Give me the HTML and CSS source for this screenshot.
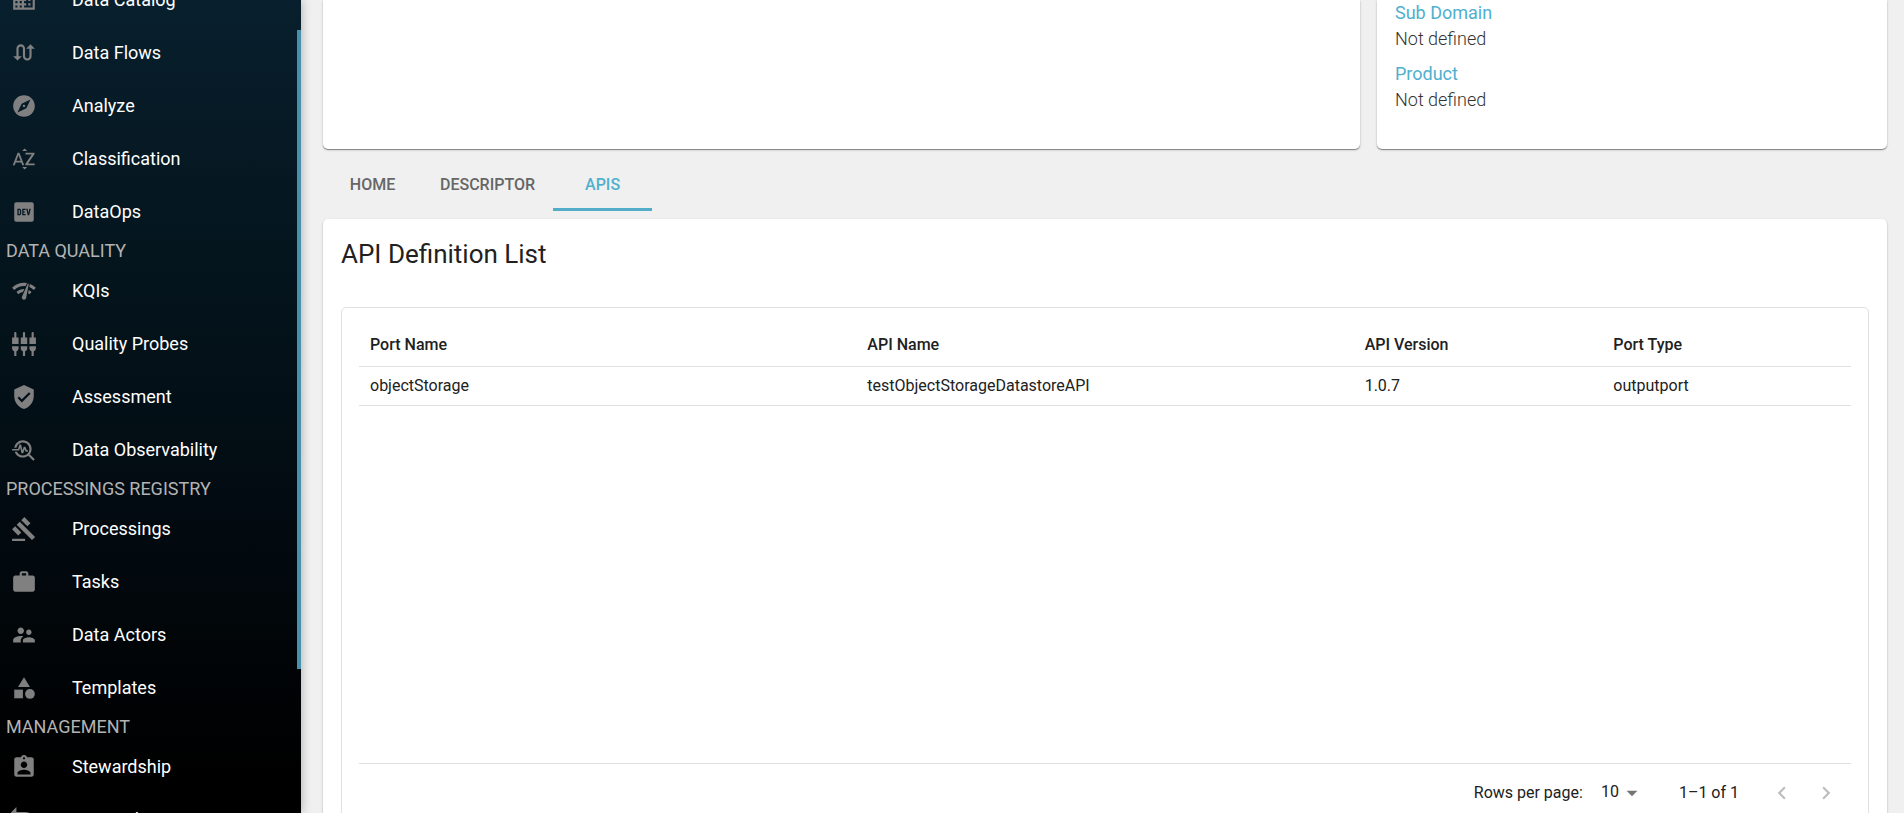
FILE: index.html
```html
<!DOCTYPE html>
<html lang="en">
<head>
<meta charset="utf-8">
<title>API Definition List</title>
<link rel="stylesheet" href="styles.css">
</head>
<body>
<div class="app">
  <aside class="sidebar">
    <nav class="menu">
      <a class="item" href="#"><svg viewBox="0 0 24 24"><path d="M12 7V3H2v18h20V7H12zM6 19H4v-2h2v2zm0-4H4v-2h2v2zm0-4H4V9h2v2zm0-4H4V5h2v2zm4 12H8v-2h2v2zm0-4H8v-2h2v2zm0-4H8V9h2v2zm0-4H8V5h2v2zm10 12h-8v-2h2v-2h-2v-2h2v-2h-2V9h8v10zm-2-8h-2v2h2v-2zm0 4h-2v2h2v-2z"/></svg>Data Catalog</a>
      <a class="item" href="#"><svg viewBox="0 0 24 24"><path d="M18 4l-4 4h3v7c0 1.100-.9 2-2 2s-2-.9-2-2V8c0-2.210-1.790-4-4-4S5 5.790 5 8v7H2l4 4 4-4H7V8c0-1.100.9-2 2-2s2 .9 2 2v7c0 2.210 1.790 4 4 4s4-1.790 4-4V8h3l-4-4z"/></svg>Data Flows</a>
      <a class="item" href="#"><svg viewBox="0 0 24 24"><path d="M12 10.900c-.61 0-1.100.49-1.100 1.100s.49 1.100 1.100 1.100c.61 0 1.100-.49 1.100-1.100s-.49-1.100-1.100-1.100zM12 2C6.480 2 2 6.480 2 12s4.480 10 10 10 10-4.480 10-10S17.520 2 12 2zm2.190 12.190L6 18l3.810-8.190L18 6l-3.810 8.190z"/></svg>Analyze</a>
      <a class="item" href="#"><svg viewBox="0 0 24 24"><path d="M14.940 4.660h-4.720l2.360-2.360zm-4.690 14.710h4.660l-2.330 2.330zM6.100 6.270L1.600 17.730h1.840l.92-2.450h5.110l.92 2.450h1.840L7.740 6.270H6.100zm-1.130 7.370l1.940-5.180 1.940 5.180H4.970zM15.730 16.140h6.120v1.590h-8.530v-1.290l5.920-8.560h-5.880v-1.600h8.300v1.260l-5.930 8.600z"/></svg>Classification</a>
      <a class="item" href="#"><svg viewBox="0 0 24 24"><path fill-rule="evenodd" d="M4 2h16a2 2 0 0 1 2 2v16a2 2 0 0 1-2 2H4a2 2 0 0 1-2-2V4a2 2 0 0 1 2-2zm1.200 6.700v6.600h2.700l1.200-1.200v-4.200L7.900 8.700zM6.500 10h1l.3.3v3.400l-.3.300h-1zM10.200 8.700v6.600h3.500V14h-2.200v-1.400h1.500v-1.200h-1.500V10h2.200V8.700zM14.300 8.700l1.600 6.600h1.400l1.600-6.600h-1.400l-.9 4.200-.9-4.200z" transform="translate(1.200 1.200) scale(.9)"/></svg>DataOps</a>
      <h2 class="heading">DATA QUALITY</h2>
      <a class="item" href="#"><svg viewBox="0 0 24 24"><path d="M15.900 5c-.17 0-.32.09-.41.23l-.07.15-5.180 11.650c-.16.29-.26.61-.26.96 0 1.110.9 2.010 2.010 2.010.96 0 1.770-.68 1.960-1.590l.01-.03L16.400 5.500c0-.28-.22-.5-.5-.5zM1 9l2 2c2.880-2.880 6.790-4.080 10.530-3.620l1.190-2.680C9.890 3.840 4.740 5.270 1 9zm20 2l2-2c-1.640-1.640-3.550-2.820-5.590-3.570l-.53 2.820c1.500.62 2.900 1.530 4.120 2.750zm-4 4l2-2c-.8-.8-1.700-1.420-2.660-1.890l-.55 2.920c.42.27.83.59 1.210.97zM5 13l2 2c1.130-1.130 2.560-1.790 4.030-2l1.280-2.880c-2.630-.08-5.300.87-7.310 2.880z"/></svg>KQIs</a>
      <a class="item" href="#"><svg viewBox="0 0 24 24"><path d="M5 2c0-.55-.45-1-1-1s-1 .45-1 1v4H1v6h6V6H5V2zm4 14c0 1.300.84 2.400 2 2.820V23h2v-4.180c1.160-.41 2-1.510 2-2.820v-2H9v2zm-8 0c0 1.300.84 2.400 2 2.820V23h2v-4.180C6.160 18.400 7 17.300 7 16v-2H1v2zM21 6V2c0-.55-.45-1-1-1s-1 .45-1 1v4h-2v6h6V6h-2zm-8-4c0-.55-.45-1-1-1s-1 .45-1 1v4H9v6h6V6h-2V2zm4 14c0 1.300.84 2.400 2 2.820V23h2v-4.180c1.160-.41 2-1.510 2-2.820v-2h-6v2z"/></svg>Quality Probes</a>
      <a class="item" href="#"><svg viewBox="0 0 24 24"><path d="M12 1L3 5v6c0 5.550 3.840 10.740 9 12 5.160-1.260 9-6.450 9-12V5l-9-4zm-2 16l-4-4 1.410-1.410L10 14.170l6.590-6.590L18 9l-8 8z"/></svg>Assessment</a>
      <a class="item" href="#"><svg viewBox="0 0 24 24"><path d="M22 20.590l-4.690-4.690C18.370 14.550 19 12.850 19 11c0-4.420-3.580-8-8-8-4.080 0-7.440 3.050-7.930 7h2.020C5.570 7.170 8.030 5 11 5c3.310 0 6 2.690 6 6s-2.690 6-6 6c-2.420 0-4.500-1.440-5.450-3.500H3.400C4.450 16.690 7.460 19 11 19c1.850 0 3.550-.63 4.900-1.690L20.590 22 22 20.590z"/><path d="M8.430 9.690L9.650 15h1.640l1.260-3.780.95 2.280h2V12h-1l-1.250-3h-1.540l-1.120 3.370L9.350 7H7.700l-1.250 4H1v1.500h6.550z"/></svg>Data Observability</a>
      <h2 class="heading">PROCESSINGS REGISTRY</h2>
      <a class="item" href="#"><svg viewBox="0 0 24 24"><path d="M1 21h12v2H1zM5.245 8.070l2.830-2.827 14.140 14.142-2.828 2.828zM12.317 1l5.657 5.656-2.830 2.830-5.654-5.660zM3.825 9.485l5.657 5.657-2.828 2.828-5.657-5.657z"/></svg>Processings</a>
      <a class="item" href="#"><svg viewBox="0 0 24 24"><path d="M20 6h-4V4c0-1.110-.89-2-2-2h-4c-1.110 0-2 .89-2 2v2H4c-1.110 0-1.990.89-1.990 2L2 19c0 1.110.89 2 2 2h16c1.110 0 2-.89 2-2V8c0-1.110-.89-2-2-2zm-6 0h-4V4h4v2z"/></svg>Tasks</a>
      <a class="item" href="#"><svg viewBox="0 0 24 24"><path d="M16.500 12c1.380 0 2.490-1.120 2.490-2.500S17.880 7 16.500 7C15.120 7 14 8.120 14 9.500s1.120 2.500 2.500 2.500zM9 11c1.660 0 2.990-1.340 2.990-3S10.660 5 9 5C7.340 5 6 6.340 6 8s1.340 3 3 3zm7.500 3c-1.830 0-5.500.92-5.500 2.750V19h11v-2.250c0-1.830-3.670-2.750-5.500-2.750zM9 13c-2.330 0-7 1.170-7 3.500V19h7v-2.250c0-.85.33-2.340 2.370-3.470C10.500 13.100 9.660 13 9 13z"/></svg>Data Actors</a>
      <a class="item" href="#"><svg viewBox="0 0 24 24"><path d="M12 2l-5.500 9h11z"/><circle cx="17.500" cy="17.500" r="4.500"/><path d="M3 13.500h8v8H3z"/></svg>Templates</a>
      <h2 class="heading">MANAGEMENT</h2>
      <a class="item" href="#"><svg viewBox="0 0 24 24"><path d="M19 3h-4.180C14.400 1.840 13.300 1 12 1c-1.300 0-2.400.84-2.820 2H5c-1.100 0-2 .9-2 2v14c0 1.100.9 2 2 2h14c1.100 0 2-.9 2-2V5c0-1.100-.9-2-2-2zm-7 0c.55 0 1 .45 1 1s-.45 1-1 1-1-.45-1-1 .45-1 1-1zm0 4c1.660 0 3 1.340 3 3s-1.340 3-3 3-3-1.340-3-3 1.340-3 3-3zm6 12H6v-1.400c0-2 4-3.100 6-3.100s6 1.100 6 3.100V19z"/></svg>Stewardship</a>
      <a class="item" href="#"><svg viewBox="0 0 24 24"><path d="M5 0L-1 6l6 6V8h8c4 0 7 2 9 6-.5-6-4-9.500-9-9.500H5z"/></svg>Demand</a>
    </nav>
    <div class="thumb"></div>
  </aside>
  <main class="main">
    <div class="summary">
      <section class="card overview"></section>
      <section class="card details">
        <dl class="facts">
          <dt>Sub Domain</dt><dd>Not defined</dd>
          <dt>Product</dt><dd>Not defined</dd>
        </dl>
      </section>
    </div>
    <div class="tabs" role="tablist">
      <button class="tab" role="tab">HOME</button>
      <button class="tab" role="tab">DESCRIPTOR</button>
      <button class="tab active" role="tab" aria-selected="true">APIS</button>
    </div>
    <section class="card apis">
      <h1 class="title">API Definition List</h1>
      <div class="panel">
        <div class="grid-body">
          <table class="table">
            <thead><tr><th class="wide">Port Name</th><th class="wide">API Name</th><th>API Version</th><th>Port Type</th></tr></thead>
            <tbody><tr><td>objectStorage</td><td>testObjectStorageDatastoreAPI</td><td>1.0.7</td><td>outputport</td></tr></tbody>
          </table>
        </div>
        <div class="pager">
          <label for="rows">Rows per page:</label>
          <span class="select-wrap">
            <select id="rows" class="select"><option>10</option><option>25</option></select>
            <svg class="caret" viewBox="0 0 24 24"><path d="M7 10l5 5 5-5z"/></svg>
          </span>
          <span class="range">1–1 of 1</span>
          <button class="arrow" aria-label="Previous page" disabled><svg viewBox="0 0 24 24"><path d="M15.410 7.410L14 6l-6 6 6 6 1.410-1.410L10.830 12z"/></svg></button>
          <button class="arrow" aria-label="Next page" disabled><svg viewBox="0 0 24 24"><path d="M10 6L8.590 7.410 13.170 12l-4.580 4.590L10 18l6-6z"/></svg></button>
        </div>
      </div>
    </section>
  </main>
</div>
</body>
</html>
```
FILE: styles.css
```css
* { box-sizing: border-box; }
body {
  margin: 0;
  font-family: Roboto, "Liberation Sans", sans-serif;
  font-size: 18px;
  color: #212121;
  background: #f0f0f0;
}
.app { display: flex; height: 100vh; overflow: hidden; }

.sidebar {
  position: relative;
  flex: 0 0 301px;
  overflow: hidden;
  background: linear-gradient(#081f2d, #04141c 35%, #020a10 65%, #000 95%);
  box-shadow: 0 0 10px rgba(0, 0, 0, 0.3);
}
.menu { margin-top: -27px; }
.item {
  display: flex;
  align-items: center;
  gap: 35px;
  height: 53px;
  padding-left: 11px;
  color: #fff;
  text-decoration: none;
}
.item svg { width: 26px; height: 26px; flex: none; fill: #808080; }
.heading {
  margin: 0;
  padding-left: 6px;
  font-size: 18px;
  font-weight: 400;
  line-height: 26px;
  color: #b3b3b3;
}
.thumb {
  position: absolute;
  top: 30px;
  right: 0;
  width: 4px;
  height: 639px;
  background: #4791ac;
}

.main { flex: 1; min-width: 0; padding: 0 17px 0 22px; }
.card {
  background: #fff;
  border-radius: 5px;
  box-shadow: 0 1px 1px rgba(0, 0, 0, 0.4), 0 1px 3px rgba(0, 0, 0, 0.14);
}
.summary {
  display: grid;
  grid-template-columns: repeat(12, 1fr);
  gap: 17px;
}
.overview { grid-column: span 8; border-radius: 0 0 5px 5px; }
.details { grid-column: span 4; border-radius: 0 0 5px 5px; padding: 0 18px 27px; }
.facts { margin: 0; line-height: 26px; }
.facts dt { color: #4fb0ce; }
.facts dd { margin: 0 0 9px; font-weight: 300; color: #333; }

.tabs { display: flex; padding-top: 9px; }
.tab {
  min-width: 99px;
  height: 53px;
  padding: 2px 18px 0;
  border: 0;
  border-bottom: 3px solid transparent;
  background: none;
  font: 500 16px Roboto, "Liberation Sans", sans-serif;
  color: #666;
}
.tab.active { color: #4fb0ce; border-bottom-color: #53adc9; }

.apis { margin-top: 8px; padding: 18px; }
.title { margin: 0; font-size: 26px; font-weight: 400; line-height: 35px; }
.panel {
  margin-top: 35px;
  padding: 17px;
  border: 1px solid #e0e0e0;
  border-radius: 5px;
  font-size: 16px;
}
.grid-body { min-height: 438px; }
.table { width: 100%; border-collapse: collapse; table-layout: fixed; }
.table th, .table td {
  padding: 0 11px;
  border-bottom: 1px solid #e0e0e0;
  text-align: left;
  font-weight: 400;
}
.table th { height: 41px; padding-bottom: 2px; font-weight: 500; }
.table td { height: 39px; }
.table .wide { width: 33.333%; }
.pager {
  display: flex;
  align-items: center;
  justify-content: flex-end;
  height: 58px;
  padding-right: 3px;
  border-top: 1px solid #e0e0e0;
}
.select-wrap { display: flex; align-items: center; position: relative; margin: 0 34px 0 9px; }
.select {
  appearance: none;
  width: 53px;
  padding: 0 26px 2px 9px;
  border: 0;
  background: none;
  font: inherit;
  color: inherit;
}
.caret {
  position: absolute;
  right: 0;
  width: 26px;
  height: 26px;
  fill: #757575;
  pointer-events: none;
}
.range { margin-right: 21px; }
.arrow { width: 44px; height: 44px; padding: 9px; border: 0; background: none; }
.arrow svg { display: block; width: 26px; height: 26px; fill: #bdbdbd; }
```
